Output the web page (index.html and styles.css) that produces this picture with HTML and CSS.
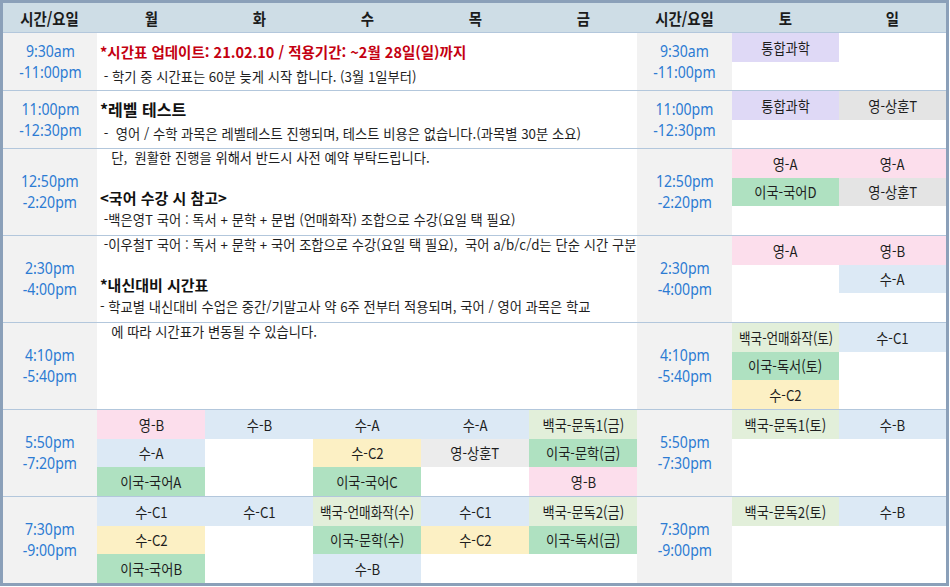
FILE: index.html
```html
<!DOCTYPE html>
<html lang="ko">
<head>
<meta charset="utf-8">
<title>시간표</title>
<link rel="stylesheet" href="styles.css">
</head>
<body>
<div class="sheet">
  <div class="head">
    <div class="hc"><span>시간/요일</span></div>
    <div class="hc"><span>월</span></div>
    <div class="hc"><span>화</span></div>
    <div class="hc"><span>수</span></div>
    <div class="hc"><span>목</span></div>
    <div class="hc"><span>금</span></div>
    <div class="hc"><span>시간/요일</span></div>
    <div class="hc"><span>토</span></div>
    <div class="hc"><span>일</span></div>
  </div>

  <div class="row r2">
    <div class="time"><span>9:30am<br>-11:00pm</span></div>
    <div class="note note-a">
      <p class="ttl red">*시간표 업데이트: 21.02.10 / 적용기간: ~2월 28일(일)까지</p>
      <p class="sub"> - 학기 중 시간표는 60분 늦게 시작 합니다. (3월 1일부터)</p>
    </div>
    <div class="time"><span>9:30am<br>-11:00pm</span></div>
    <div class="col"><div class="slot purple"><span>통합과학</span></div></div>
    <div class="col"></div>
  </div>

  <div class="row r2">
    <div class="time"><span>11:00pm<br>-12:30pm</span></div>
    <div class="note note-b">
      <p class="ttl big">*레벨 테스트</p>
      <p class="sub"> -  영어 / 수학 과목은 레벨테스트 진행되며, 테스트 비용은 없습니다.(과목별 30분 소요)</p>
    </div>
    <div class="time"><span>11:00pm<br>-12:30pm</span></div>
    <div class="col"><div class="slot purple"><span>통합과학</span></div></div>
    <div class="col"><div class="slot gray"><span>영-상훈T</span></div></div>
  </div>

  <div class="row r3">
    <div class="time"><span>12:50pm<br>-2:20pm</span></div>
    <div class="note">
      <p class="first">   단,  원활한 진행을 위해서 반드시 사전 예약 부탁드립니다.</p>
      <p class="ttl gap">&lt;국어 수강 시 참고&gt;</p>
      <p class="sub2"> -백은영T 국어 : 독서 + 문학 + 문법 (언매화작) 조합으로 수강(요일 택 필요)</p>
    </div>
    <div class="time"><span>12:50pm<br>-2:20pm</span></div>
    <div class="col">
      <div class="slot pink"><span>영-A</span></div>
      <div class="slot green"><span>이국-국어D</span></div>
    </div>
    <div class="col">
      <div class="slot pink"><span>영-A</span></div>
      <div class="slot gray"><span>영-상훈T</span></div>
    </div>
  </div>

  <div class="row r3">
    <div class="time"><span>2:30pm<br>-4:00pm</span></div>
    <div class="note">
      <p class="first"> -이우철T 국어 : 독서 + 문학 + 국어 조합으로 수강(요일 택 필요),  국어 a/b/c/d는 단순 시간 구분입니다.</p>
      <p class="ttl gap">*내신대비 시간표</p>
      <p class="sub2">- 학교별 내신대비 수업은 중간/기말고사 약 6주 전부터 적용되며, 국어 / 영어 과목은 학교</p>
    </div>
    <div class="time"><span>2:30pm<br>-4:00pm</span></div>
    <div class="col">
      <div class="slot pink"><span>영-A</span></div>
    </div>
    <div class="col">
      <div class="slot pink"><span>영-B</span></div>
      <div class="slot blue"><span>수-A</span></div>
    </div>
  </div>

  <div class="row r3">
    <div class="time"><span>4:10pm<br>-5:40pm</span></div>
    <div class="note">
      <p class="first">   에 따라 시간표가 변동될 수 있습니다.</p>
    </div>
    <div class="time"><span>4:10pm<br>-5:40pm</span></div>
    <div class="col">
      <div class="slot pale"><span class="lg">백국-언매화작(토)</span></div>
      <div class="slot green"><span>이국-독서(토)</span></div>
      <div class="slot yellow"><span>수-C2</span></div>
    </div>
    <div class="col">
      <div class="slot blue"><span>수-C1</span></div>
    </div>
  </div>

  <div class="row r3">
    <div class="time"><span>5:50pm<br>-7:20pm</span></div>
    <div class="col">
      <div class="slot pink"><span>영-B</span></div>
      <div class="slot blue"><span>수-A</span></div>
      <div class="slot green"><span>이국-국어A</span></div>
    </div>
    <div class="col">
      <div class="slot blue"><span>수-B</span></div>
    </div>
    <div class="col">
      <div class="slot blue"><span>수-A</span></div>
      <div class="slot yellow"><span>수-C2</span></div>
      <div class="slot green"><span>이국-국어C</span></div>
    </div>
    <div class="col">
      <div class="slot blue"><span>수-A</span></div>
      <div class="slot lgray"><span>영-상훈T</span></div>
    </div>
    <div class="col">
      <div class="slot pale"><span>백국-문독1(금)</span></div>
      <div class="slot green"><span>이국-문학(금)</span></div>
      <div class="slot pink"><span>영-B</span></div>
    </div>
    <div class="time"><span>5:50pm<br>-7:30pm</span></div>
    <div class="col">
      <div class="slot pale"><span>백국-문독1(토)</span></div>
    </div>
    <div class="col">
      <div class="slot blue"><span>수-B</span></div>
    </div>
  </div>

  <div class="row r3 last">
    <div class="time"><span>7:30pm<br>-9:00pm</span></div>
    <div class="col">
      <div class="slot blue"><span>수-C1</span></div>
      <div class="slot yellow"><span>수-C2</span></div>
      <div class="slot green"><span>이국-국어B</span></div>
    </div>
    <div class="col">
      <div class="slot blue"><span>수-C1</span></div>
    </div>
    <div class="col">
      <div class="slot pale"><span class="lg">백국-언매화작(수)</span></div>
      <div class="slot green"><span>이국-문학(수)</span></div>
      <div class="slot blue"><span>수-B</span></div>
    </div>
    <div class="col">
      <div class="slot blue"><span>수-C1</span></div>
      <div class="slot yellow"><span>수-C2</span></div>
    </div>
    <div class="col">
      <div class="slot pale"><span>백국-문독2(금)</span></div>
      <div class="slot green"><span>이국-독서(금)</span></div>
    </div>
    <div class="time"><span>7:30pm<br>-9:00pm</span></div>
    <div class="col">
      <div class="slot pale"><span>백국-문독2(토)</span></div>
    </div>
    <div class="col">
      <div class="slot blue"><span>수-B</span></div>
    </div>
  </div>
</div>
</body>
</html>
```
FILE: styles.css
```css
* { box-sizing: border-box; }

body {
  margin: 0;
  background: #ffffff;
  font-family: "Noto Sans CJK KR", "Noto Sans", sans-serif;
  color: #1e1e1e;
}

.sheet {
  width: 949px;
  height: 586px;
  border: 3px solid #8ba0b9;
  background: #ffffff;
  overflow: hidden;
}

.head,
.row {
  display: grid;
  grid-template-columns: 94px repeat(5, 108px) 95px 107px 107px;
}

.head {
  height: 30px;
  background: #cedde6;
  border-bottom: 1px solid #b3c7dc;
}

.hc {
  display: flex;
  align-items: center;
  justify-content: center;
  font-weight: 700;
  font-size: 16px;
  color: #1b1b1b;
}

.hc span {
  display: inline-block;
  transform: scaleX(0.9);
}

.row {
  border-bottom: 1px solid #b3c7dc;
}

.r2 { height: 58px; }
.r3 { height: 87px; }
.row.last { height: 86px; border-bottom: 0; }

.time {
  background: #f2f2f2;
  display: flex;
  align-items: center;
  justify-content: center;
  text-align: center;
  color: #2c7bd3;
  font-family: "Noto Sans", "Noto Sans CJK KR", sans-serif;
  font-size: 16px;
  line-height: 21px;
}

.time span {
  display: inline-block;
  transform: scaleX(0.88);
}

.note {
  grid-column: span 5;
  overflow: hidden;
  padding-left: 3px;
  font-size: 13.3px;
}

.note p {
  margin: 0;
  white-space: pre;
}

.note-a { padding-top: 8px; }
.note-b { padding-top: 7px; }

.ttl {
  font-weight: 700;
  font-size: 15px;
  line-height: 22px;
  color: #111;
}

.ttl.big {
  font-size: 16px;
}

.ttl.red {
  color: #c40010;
  font-size: 14.5px;
}

.note .sub {
  margin-top: 3px;
  line-height: 22px;
}

.first {
  line-height: 18px;
}

.note .gap {
  margin-top: 20px;
}

.sub2 {
  line-height: 22px;
}

.col {
  display: flex;
  flex-direction: column;
  min-width: 0;
}

.slot {
  display: flex;
  align-items: center;
  justify-content: center;
  font-size: 15px;
  color: #1e1e1e;
  white-space: nowrap;
}

.r2 .slot { height: 28.5px; }
.r3 .slot { height: 28.67px; }

.slot span {
  display: inline-block;
  transform: scaleX(0.88);
}

.slot span.lg {
  transform: scaleX(0.84);
}

.purple { background: #dfd9f6; }
.gray   { background: #e4e4e4; }
.lgray  { background: #ececec; }
.pink   { background: #fcdeec; }
.green  { background: #afe1c1; }
.blue   { background: #dce9f5; }
.pale   { background: #e2efda; }
.yellow { background: #fcf0c4; }
```
